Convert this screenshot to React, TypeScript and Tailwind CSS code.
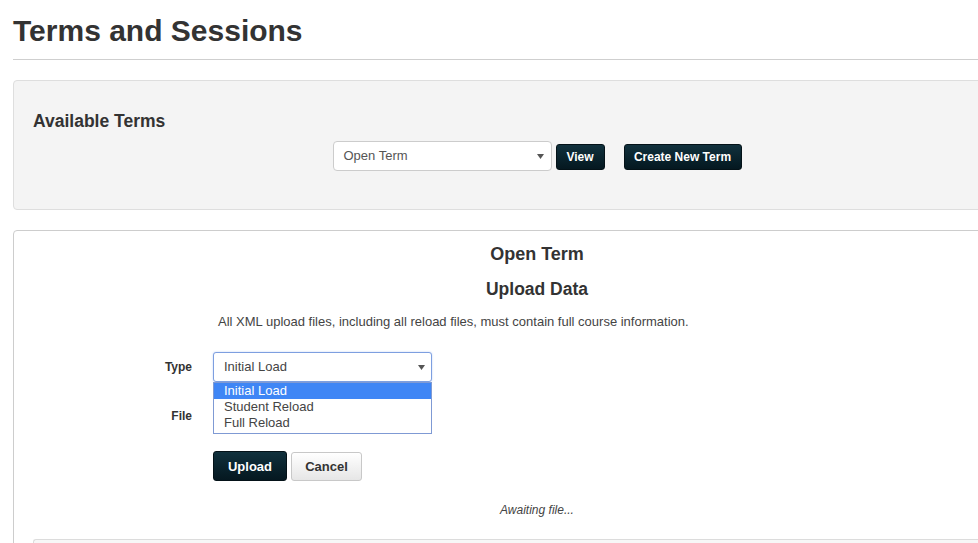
import React from "react";

const darkBtn =
  "rounded-[3px] border border-[#041218] bg-gradient-to-b from-[#11313d] to-[#051820] text-white font-bold text-[12px] leading-none";

function Caret() {
  return (
    <svg width="7" height="5" viewBox="0 0 7 5" className="fill-[#555]">
      <path d="M0 0h7L3.5 5z" />
    </svg>
  );
}

export default function App() {
  return (
    <div className="w-[978px] h-[543px] overflow-hidden bg-white text-[#333] font-['Liberation_Sans',Arial,sans-serif]">
      <div className="w-[1100px] pl-[13px]">
        {/* Page heading */}
        <h1 className="pt-[14px] pb-[12px] text-[30px] font-bold leading-[33px]">
          Terms and Sessions
        </h1>
        <div className="w-[966px] border-t border-[#cfcfcf]" />

        {/* Available terms */}
        <section className="mt-[20px] w-[1048px] h-[130px] rounded-[4px] border border-[#dedede] bg-[#f4f4f4] px-[19px] pt-[29px]">
          <h3 className="text-[17.5px] font-bold leading-[22px]">Available Terms</h3>
          <div className="mt-[9px] flex items-start justify-center">
            <div className="flex h-[30px] w-[219px] items-center justify-between rounded-[4px] border border-[#ccc] bg-white pl-[10px] pr-[7px] text-[13px] text-[#555]">
              <span>Open Term</span>
              <Caret />
            </div>
            <button className={`${darkBtn} ml-[4px] mt-[3px] h-[26px] w-[49px]`}>View</button>
            <button className={`${darkBtn} ml-[19px] mt-[3px] h-[26px] w-[118px]`}>Create New Term</button>
          </div>
        </section>

        {/* Upload panel */}
        <section className="mt-[20px] w-[1048px] h-[330px] rounded-[4px] border border-[#cdcdcd] bg-white">
          <h3 className="pt-[12px] text-center text-[18px] font-bold leading-[22px]">Open Term</h3>
          <h3 className="mt-[13px] text-center text-[17.5px] font-bold leading-[22px]">Upload Data</h3>
          <p className="mt-[13px] ml-[204px] text-[13px] leading-[17px] text-[#444]">
            All XML upload files, including all reload files, must contain full course information.
          </p>

          {/* Type row */}
          <div className="mt-[22px] flex items-center">
            <label className="w-[179px] pr-[1px] text-right text-[12px] font-bold">Type</label>
            <div className="relative ml-[20px]">
              <div className="flex h-[30px] w-[219px] items-center justify-between rounded-[3px] border border-[#7d9fe0] bg-white pl-[10px] pr-[6px] text-[13px] text-[#444] shadow-[0_0_2px_rgba(90,140,230,0.4)]">
                <span>Initial Load</span>
                <Caret />
              </div>
              <ul className="absolute left-0 top-[30px] z-10 w-[219px] border border-[#7f9ad4] bg-white text-[13px] leading-[16px] text-[#444]">
                <li className="bg-[#3f86f5] pl-[10px] text-white">Initial Load</li>
                <li className="pl-[10px]">Student Reload</li>
                <li className="pl-[10px] pb-[2px]">Full Reload</li>
              </ul>
            </div>
          </div>

          {/* File row */}
          <div className="mt-[20px] flex h-[28px] items-center">
            <label className="w-[179px] pr-[1px] text-right text-[12px] font-bold">File</label>
          </div>

          {/* Actions */}
          <div className="mt-[21px] ml-[199px] flex items-start">
            <button className={`${darkBtn} h-[30px] w-[74px] text-[13px]`}>Upload</button>
            <button className="ml-[4px] mt-[1px] h-[29px] w-[71px] rounded-[3px] border border-[#c8c8c8] bg-gradient-to-b from-white to-[#e6e6e6] text-[13px] font-bold text-[#333]">
              Cancel
            </button>
          </div>

          <p className="mt-[20px] text-center text-[12px] italic text-[#444]">Awaiting file...</p>

          <div className="mt-[20px] ml-[19px] h-[20px] rounded-t-[3px] border-t border-l border-[#dcdcdc] bg-[#f7f7f7]" />
        </section>
      </div>
    </div>
  );
}
